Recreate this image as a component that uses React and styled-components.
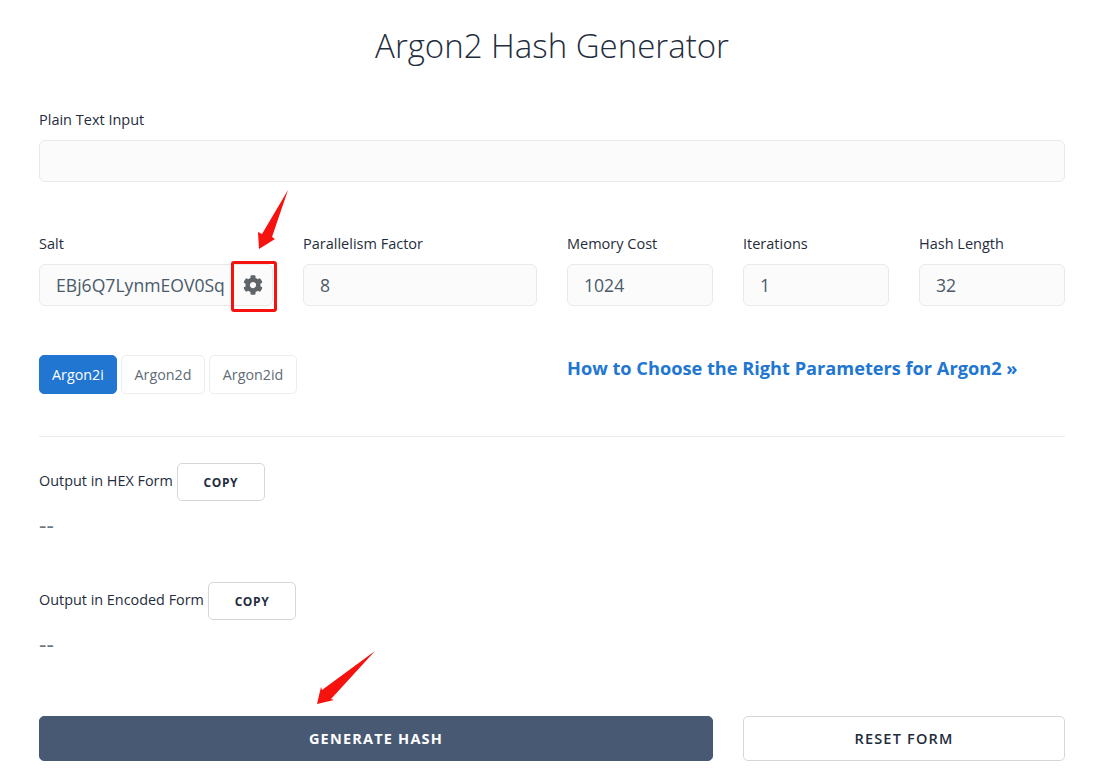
import styled, { createGlobalStyle } from 'styled-components';
import { FaCog } from 'react-icons/fa';

const Global = createGlobalStyle`
  html, body { margin: 0; padding: 0; background: #fff; }
  body { font-family: "Open Sans", "Liberation Sans", sans-serif; color: #1f2d3d; }
`;

const Page = styled.div`
  position: relative;
  width: 1026px;
  height: 781px;
  padding: 0 39px;
  overflow: hidden;
`;

const Title = styled.h1`
  margin: 0;
  padding-top: 23px;
  height: 46px;
  font-size: 33px;
  line-height: 46px;
  font-weight: 300;
  text-align: center;
  color: #1f2d3d;
`;

const Label = styled.label`
  display: block;
  font-size: 14.5px;
  line-height: 20px;
  font-weight: 400;
  color: #1f2d3d;
`;

const Field = styled.div`
  display: flex;
  flex-direction: column;
  gap: 10px;
`;

const PlainField = styled(Field)`
  margin-top: 41px;
`;

const Input = styled.div`
  box-sizing: border-box;
  height: 42px;
  padding: 0 16px;
  display: flex;
  align-items: center;
  background: #fbfbfb;
  border: 1px solid #e8e9ea;
  border-radius: 6px;
  font-size: 17.6px;
  color: #4a5a6a;
  white-space: nowrap;
`;

const ParamRow = styled.div`
  display: grid;
  grid-template-columns: 234px 234px 146px 146px 146px;
  column-gap: 30px;
  margin-top: 52px;
`;

const SaltBox = styled.div`
  position: relative;
`;

const SaltInput = styled(Input)`
  padding-right: 0;
`;

const Gear = styled.span`
  position: absolute;
  top: 0;
  right: 10px;
  height: 42px;
  display: flex;
  align-items: center;
  color: #5f6468;
  font-size: 20px;
`;

const RedBox = styled.div`
  position: absolute;
  left: 192px;
  top: -3px;
  width: 46px;
  height: 51px;
  box-sizing: border-box;
  border: 3px solid #f5120f;
  border-radius: 3px;
`;

const AlgoRow = styled.div`
  display: grid;
  grid-template-columns: 498px 1fr;
  column-gap: 30px;
  margin-top: 49px;
  align-items: start;
`;

const Tabs = styled.div`
  display: flex;
  gap: 4px;
`;

const Tab = styled.button`
  box-sizing: border-box;
  height: 39px;
  padding: 0 ${p => (p.$active ? 12 : 12.7)}px 1px;
  font-family: inherit;
  font-size: 14.3px;
  border-radius: 5px;
  border: 1px solid ${p => (p.$active ? '#2176d2' : '#ecedee')};
  background: ${p => (p.$active ? '#2176d2' : '#fff')};
  color: ${p => (p.$active ? '#fff' : '#5f6b76')};
`;

const HelpLink = styled.a`
  font-size: 18.2px;
  line-height: 26px;
  font-weight: 700;
  color: #2176d2;
  text-decoration: none;
`;

const Divider = styled.hr`
  margin: 42px 0 0;
  border: 0;
  border-top: 1px solid #e9eaeb;
`;

const OutputHead = styled.div`
  display: flex;
  align-items: center;
  gap: 4px;
  margin-top: ${p => p.$top}px;
`;

const OutputLabel = styled(Label)`
  padding-bottom: 3px;
  font-size: 14.4px;
`;

const CopyButton = styled.button`
  box-sizing: border-box;
  width: 88px;
  height: 38px;
  background: #fff;
  border: 1px solid #d4d6d8;
  border-radius: 5px;
  font-family: inherit;
  font-size: 12px;
  font-weight: 700;
  letter-spacing: 0.6px;
  color: #1f2d3d;
`;

const OutputValue = styled.div`
  margin-top: 10px;
  font-size: 23px;
  line-height: 28px;
  color: #6b7680;
`;

const Actions = styled.div`
  display: grid;
  grid-template-columns: 674px 322px;
  column-gap: 30px;
  margin-top: 58px;
`;

const ActionButton = styled.button`
  box-sizing: border-box;
  height: 45px;
  border-radius: 5px;
  font-family: inherit;
  font-size: 14.5px;
  letter-spacing: 1.2px;
  font-weight: ${p => (p.$primary ? 700 : 600)};
  border: 1px solid ${p => (p.$primary ? '#485973' : '#d4d6d8')};
  background: ${p => (p.$primary ? '#485973' : '#fff')};
  color: ${p => (p.$primary ? '#fff' : '#1f2d3d')};
`;

const Arrow = styled.svg`
  position: absolute;
  left: 0;
  top: 0;
  pointer-events: none;
`;

const params = [
  ['Parallelism Factor', '8'],
  ['Memory Cost', '1024'],
  ['Iterations', '1'],
  ['Hash Length', '32'],
];

export default function App() {
  return (
    <Page>
      <Global />
      <Title>Argon2 Hash Generator</Title>

      <PlainField>
        <Label>Plain Text Input</Label>
        <Input />
      </PlainField>

      <ParamRow>
        <Field>
          <Label>Salt</Label>
          <SaltBox>
            <SaltInput>EBj6Q7LynmEOV0Sq</SaltInput>
            <Gear><FaCog /></Gear>
            <RedBox />
          </SaltBox>
        </Field>
        {params.map(([name, value]) => (
          <Field key={name}>
            <Label>{name}</Label>
            <Input>{value}</Input>
          </Field>
        ))}
      </ParamRow>

      <AlgoRow>
        <Tabs>
          <Tab $active>Argon2i</Tab>
          <Tab>Argon2d</Tab>
          <Tab>Argon2id</Tab>
        </Tabs>
        <HelpLink href="#">How to Choose the Right Parameters for Argon2 »</HelpLink>
      </AlgoRow>

      <Divider />

      <OutputHead $top={26}>
        <OutputLabel>Output in HEX Form</OutputLabel>
        <CopyButton>COPY</CopyButton>
      </OutputHead>
      <OutputValue>--</OutputValue>

      <OutputHead $top={43}>
        <OutputLabel>Output in Encoded Form</OutputLabel>
        <CopyButton>COPY</CopyButton>
      </OutputHead>
      <OutputValue>--</OutputValue>

      <Actions>
        <ActionButton $primary>GENERATE HASH</ActionButton>
        <ActionButton>RESET FORM</ActionButton>
      </Actions>

      <Arrow width="1104" height="781" viewBox="0 0 1104 781">
        <polygon fill="#f5120f" points="288,190 272,237 275,239 259,249 258,232 262,234" />
        <polygon fill="#f5120f" points="375,651 331,699 334,700 317,704 321,687 322,690" />
      </Arrow>
    </Page>
  );
}
